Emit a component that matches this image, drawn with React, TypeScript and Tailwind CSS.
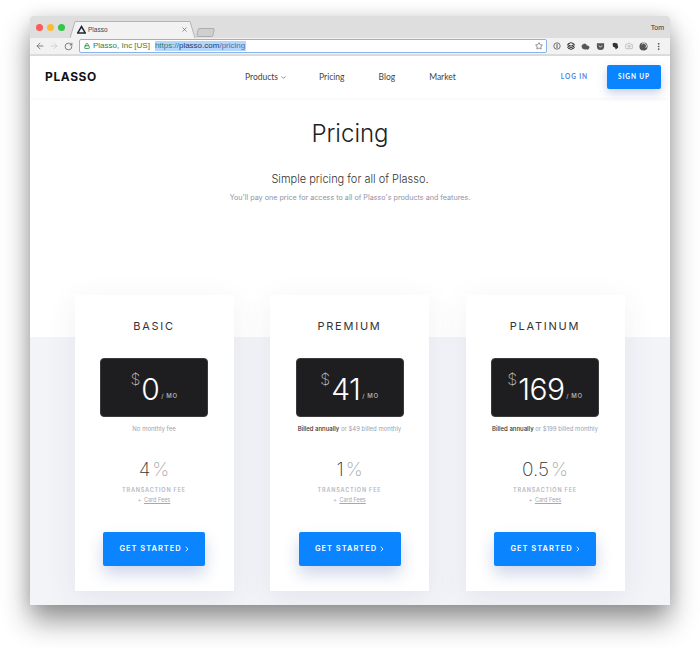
import React from 'react';
import { ArrowLeft, ArrowRight, RotateCw, Star, Lock, ChevronDown, ChevronRight, X, Camera, Cloud, MoreVertical, Layers } from 'lucide-react';

const plans = [
  { name: 'BASIC', price: '0', strong: '', note: 'No monthly fee', fee: '4' },
  { name: 'PREMIUM', price: '41', strong: 'Billed annually', note: ' or $49 billed monthly', fee: '1' },
  { name: 'PLATINUM', price: '169', strong: 'Billed annually', note: ' or $199 billed monthly', fee: '0.5' },
];

const PlanCard: React.FC<{ plan: (typeof plans)[number] }> = ({ plan }) => (
  <div className="w-[159px] h-[296px] bg-white flex flex-col items-center shadow-[0_8px_30px_rgba(60,70,110,0.08)]">
    <h3 className="mt-[24px] text-[11px] leading-[14px] tracking-[0.16em] text-[#333]">{plan.name}</h3>
    <div className="mt-[25px] w-[108px] h-[59px] bg-[#1e1e20] rounded-[4px] border border-[#3a3a3c] flex items-center justify-center text-white">
      <span className="text-[16px] leading-none font-extralight text-[#bbb] self-start mt-[12px] mr-[1px]">$</span>
      <span className="text-[30px] leading-none font-light tracking-[-0.02em] mt-[3px]">{plan.price}</span>
      <span className="text-[6px] leading-none tracking-[0.1em] font-semibold text-[#aaa] self-end mb-[17px] ml-[2px]">/ MO</span>
    </div>
    <p className="mt-[7px] text-[6px] leading-[10px] text-[#9a9fb2] whitespace-nowrap">
      {plan.strong && <span className="text-[#333] font-medium">{plan.strong}</span>}
      {plan.note}
    </p>
    <div className="mt-[26px] h-[20px] flex items-end text-[19px] leading-[20px] font-extralight text-[#333]">
      <span>{plan.fee}</span>
      <span className="ml-[2px] text-[#aaa]">%</span>
    </div>
    <div className="mt-[6px] text-[5.5px] leading-[8px] tracking-[0.15em] font-semibold text-[#b4b7c2]">TRANSACTION FEE</div>
    <div className="mt-[2px] text-[5.5px] leading-[9px] text-[#a5a8b4]">
      + <span className="underline ml-[1px]">Card Fees</span>
    </div>
    <button className="mt-[27px] w-[102px] h-[34px] pl-[2px] bg-[#0a84ff] rounded-[2px] flex items-center justify-center gap-[1px] text-white text-[7.5px] font-semibold tracking-[0.13em] shadow-[0_8px_16px_rgba(40,70,160,0.22)]">
      GET STARTED
      <ChevronRight className="w-[8px] h-[8px]" strokeWidth={2.5} />
    </button>
  </div>
);

export default function App() {
  return (
    <div className="w-[700px] h-[648px] bg-white overflow-hidden pt-[16px] pl-[30px]">
      <div className="w-[640px] h-[589px] flex flex-col overflow-hidden rounded-t-[4px] bg-white shadow-[0_16px_28px_rgba(0,0,0,0.42),0_0_16px_rgba(0,0,0,0.1)] font-['Inter',sans-serif] antialiased">
        {/* tab strip */}
        <div className="h-[22px] bg-[#dedede] flex items-end relative shrink-0">
          <div className="flex items-center gap-[4px] absolute left-[6px] top-[8px]">
            <span className="w-[7px] h-[7px] rounded-full bg-[#fc5b57]" />
            <span className="w-[7px] h-[7px] rounded-full bg-[#fdbb2e]" />
            <span className="w-[7px] h-[7px] rounded-full bg-[#33c748]" />
          </div>
          <div className="ml-[40px] w-[126px] h-[17px] relative flex items-center pl-[7px] pr-[8px]">
            <svg viewBox="0 0 126 17" className="absolute inset-0 w-full h-full">
              <path d="M0 17 L5 0.5 H120 L125 17" fill="#f2f2f2" stroke="#b5b5b5" strokeWidth="1" />
            </svg>
            <svg viewBox="0 0 12 11" className="relative w-[9px] h-[9px] shrink-0">
              <path d="M6 1.5 L11 10 H1 Z" fill="none" stroke="#1c2438" strokeWidth="2" />
            </svg>
            <span className="relative ml-[2px] text-[6.5px] text-[#444] font-['Liberation_Sans',sans-serif]">Plasso</span>
            <X className="relative ml-auto w-[7px] h-[7px] text-[#555]" strokeWidth={2} />
          </div>
          <div className="ml-[1px] mb-[1px] w-[17px] h-[9px] bg-[#cfcfcf] border border-[#aeaeae] rounded-[2px] -skew-x-12" />
          <span className="absolute right-[6px] top-[7px] text-[7px] leading-[9px] text-[#333] font-['Liberation_Sans',sans-serif]">Tom</span>
        </div>
        {/* toolbar */}
        <div className="h-[18px] bg-[#f2f2f2] border-b-2 border-[#dcdcdc] flex items-center pl-[5px] pr-[7px] shrink-0">
          <ArrowLeft className="w-[10px] h-[10px] text-[#777]" strokeWidth={2.2} />
          <ArrowRight className="ml-[4px] w-[10px] h-[10px] text-[#cfcfcf]" strokeWidth={2.2} />
          <RotateCw className="ml-[5px] w-[9px] h-[9px] text-[#666]" strokeWidth={2.2} />
          <div className="ml-[6px] w-[468px] h-[14px] bg-white border border-[#8ab4e8] rounded-[2px] flex items-center pl-[4px] pr-[3px] text-[8px] font-['Liberation_Sans',sans-serif]">
            <Lock className="w-[6px] h-[6px] text-[#1b8a3b]" strokeWidth={3} />
            <span className="ml-[3px] text-[#2f7d4a]">Plasso, Inc [US]</span>
            <span className="ml-[5px] bg-[#b4d5fc] text-[#1d3b5c] leading-[10px] pr-[1px]">
              <span className="text-[#2f7d6a]">https://</span>plasso.com<span className="text-[#55709a]">/pricing</span>
            </span>
            <Star className="ml-auto w-[8px] h-[8px] text-[#555]" strokeWidth={2} />
          </div>
          <div className="ml-auto flex items-center gap-[6px] text-[#555]">
            <svg viewBox="0 0 10 10" className="w-[8px] h-[8px]">
              <circle cx="5" cy="5" r="4" fill="none" stroke="#555" strokeWidth="1" />
              <rect x="4.4" y="2.5" width="1.2" height="5" fill="#555" />
            </svg>
            <Layers className="w-[8px] h-[8px] text-[#222]" strokeWidth={3} />
            <Cloud className="w-[9px] h-[9px] text-[#555]" fill="#555" strokeWidth={1} />
            <svg viewBox="0 0 10 10" className="w-[9px] h-[9px]">
              <path d="M1 1.5 H9 V5 A4 4 0 0 1 1 5 Z" fill="#555" />
              <path d="M3.2 4 L5 5.8 L6.8 4" fill="none" stroke="#fff" strokeWidth="1" />
            </svg>
            <svg viewBox="0 0 10 10" className="w-[8px] h-[8px]">
              <path d="M2 2 L4 1 L8 2 L9 7 L6 9.5 L5 7 L2.5 6 Z" fill="#333" />
            </svg>
            <Camera className="w-[8px] h-[8px] text-[#aaa]" strokeWidth={2} />
            <svg viewBox="0 0 10 10" className="w-[9px] h-[9px]">
              <circle cx="5" cy="5" r="4.5" fill="#555" />
              <path d="M3 2.5 A3 3 0 0 1 7.5 6.5" fill="none" stroke="#eee" strokeWidth="1" />
            </svg>
            <MoreVertical className="w-[9px] h-[9px] text-[#555]" strokeWidth={2.5} />
          </div>
        </div>
        {/* site nav */}
        <header className="h-[42px] bg-white flex items-center relative shrink-0 shadow-[0_1px_3px_rgba(60,70,110,0.05)] z-10">
          <span className="ml-[15px] w-[53px] text-[12px] font-bold tracking-[0.05em] text-[#111]">PLASSO</span>
          <nav className="ml-[147px] flex items-center text-[8.5px] text-[#444] font-['Lato',sans-serif]">
            <span className="flex items-center gap-[2px]">Products<ChevronDown className="w-[7px] h-[7px]" strokeWidth={2} /></span>
            <span className="ml-[32px]">Pricing</span>
            <span className="ml-[34px]">Blog</span>
            <span className="ml-[34px]">Market</span>
          </nav>
          <span className="ml-auto text-[6.5px] font-bold tracking-[0.14em] text-[#4a86e8] font-['Lato',sans-serif]">LOG IN</span>
          <button className="ml-[19px] mr-[9px] w-[54px] h-[24px] bg-[#0a84ff] rounded-[2px] text-white text-[6.5px] font-bold tracking-[0.14em] font-['Lato',sans-serif] shadow-[0_4px_10px_rgba(40,70,160,0.25)]">
            SIGN UP
          </button>
        </header>
        {/* page */}
        <main className="flex-1 flex flex-col items-center bg-[linear-gradient(#fff_0,#fff_239px,#f3f4f8_239px)]">
          <h1 className="mt-[20px] text-[24px] leading-[32px] font-light text-[#222]">Pricing</h1>
          <p className="mt-[21px] text-[11px] leading-[16px] font-light text-[#333]">Simple pricing for all of Plasso.</p>
          <p className="mt-[5px] text-[7.2px] leading-[11px] text-[#8f93a5]">You'll pay one price for access to all of Plasso's products and features.</p>
          <div className="mt-[92px] flex gap-[36.5px] ml-[-1px]">
            {plans.map((p) => (
              <PlanCard key={p.name} plan={p} />
            ))}
          </div>
        </main>
      </div>
    </div>
  );
}
